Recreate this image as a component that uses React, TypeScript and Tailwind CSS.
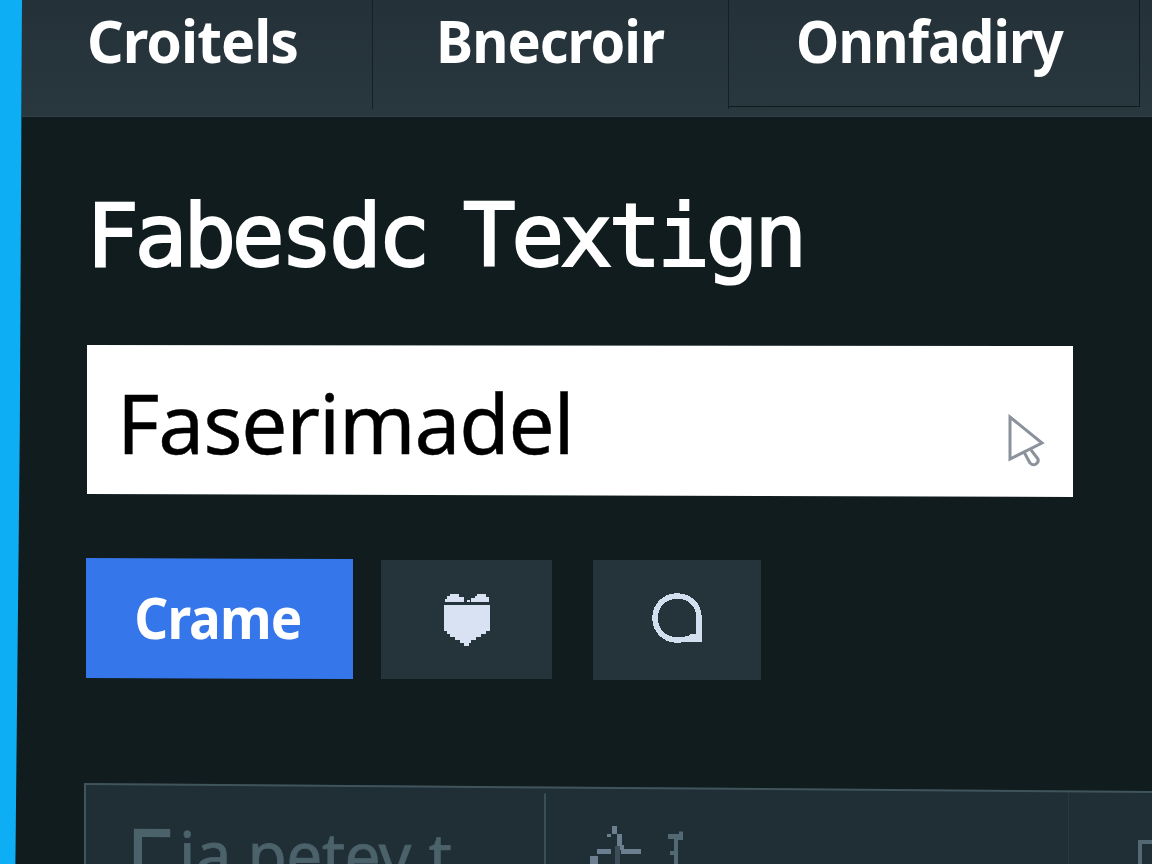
import React from 'react';

const tabs = [
  { label: 'Croitels', className: 'h-[109px] w-[351px] border-r border-[#152023] pl-[65px]', text: 'scale-x-[0.97]' },
  { label: 'Bnecroir', className: 'h-[109px] w-[356px] border-r border-[#152023] pl-[63px]', text: 'scale-x-[0.945]' },
  { label: 'Onnfadiry', className: 'h-[107px] w-[411px] border-r border-b border-[#111b1d] pl-[67px]', text: 'scale-x-[0.928]' },
];

const TabBar: React.FC = () => (
  <nav className="flex h-[117px] bg-gradient-to-b from-[#243138] to-[#29373e] border-b border-[#314047] text-[59px] leading-[80px] font-bold tracking-[-1px] text-white">
    {tabs.map((tab) => (
      <div key={tab.label} className={`shrink-0 whitespace-nowrap ${tab.className}`}>
        <span className={`inline-block origin-left ${tab.text}`}>{tab.label}</span>
      </div>
    ))}
  </nav>
);

const PointerIcon: React.FC = () => (
  <svg width="38" height="54" viewBox="0 0 38 54" fill="none" stroke="#8b929c" strokeWidth="3">
    <path d="M3 3v42L35 29Z" />
    <path d="M17 38l6 11q3 3 6 1t2-5l-7-9" />
  </svg>
);

const ShieldIcon: React.FC = () => (
  <svg width="48" height="54" viewBox="0 0 48 54" fill="#d8e2f2" shapeRendering="crispEdges">
    <path d="M2 9V6h2V3h3V1h9v3h5v5ZM24 9V7h3v2ZM28 9V5h4V3h2V1h9v3h3v5Z" />
    <path d="M1 12h46v26h-4v3h-5v3h-5v3h-5v3h-2v3h-5v-3h-4v-3h-5v-3H7v-3H4v-3H1Z" />
  </svg>
);

const BubbleIcon: React.FC = () => (
  <svg width="52" height="52" viewBox="0 0 52 52" fill="none" stroke="#d3deef" strokeWidth="5.5" shapeRendering="crispEdges">
    <path d="M48 25C48 11 38 3 26 3S4 12 4 25s10 22 22 22c4 0 8-1 11-1h11Z" />
    <path d="M36 47l3-6h9v6Z" fill="#d3deef" stroke="none" />
  </svg>
);

const DetailsPanel: React.FC = () => (
  <div className="ml-[62px] h-[90px] overflow-hidden flex origin-top-left skew-y-[0.43deg] border-t-2 border-l-2 border-[#40545b] bg-[#202e35] text-[#4b626b]">
    <div className="flex w-[458px] shrink-0 pl-[39px] whitespace-nowrap text-[64px] leading-[135px]">
      <span className="w-[54px] origin-left scale-x-[0.86] text-[106px] leading-[157px]">F</span>
      <span className="[-webkit-text-stroke:0.8px_#4b626b]">ia</span>
      <span className="pl-[16px] tracking-[-0.5px] [-webkit-text-stroke:0.8px_#4b626b]">petev</span>
      <span className="pl-[18px] [-webkit-text-stroke:0.8px_#4b626b]">t</span>
    </div>
    <div className="mt-[5px] flex w-[524px] shrink-0 border-l-2 border-[#394e57] pl-[44px] pt-[32px]">
      <svg width="52" height="46" viewBox="0 0 52 46" fill="#6b7f90" shapeRendering="crispEdges">
        <path d="M22 0h5v8h-5ZM17 8h4v3h-4ZM27 8h5v11h2v5h-4v-4h-3ZM7 23h14v5H7ZM31 23h20v5H31ZM0 30h8v12H0Z" />
        <path d="M25 20h5v24h-5Z" fill="#3d4e58" />
      </svg>
      <svg className="ml-[25px] mt-[5px]" width="18" height="42" viewBox="0 0 18 42" fill="#526873" shapeRendering="crispEdges">
        <path d="M1 3h11V0h4v9h-5v27H7V24H3v-4h4V8H1Z" />
      </svg>
    </div>
    <div className="flex-1 border-l border-[#263840] pl-[69px] pt-[47px]">
      <div className="h-[50px] w-[40px] border-t-4 border-l-4 border-[#526873]" />
    </div>
  </div>
);

const App: React.FC = () => {
  return (
    <div className="relative flex h-[864px] w-[1152px] overflow-hidden bg-[#101c1d] font-['Noto_Sans',sans-serif]">
      <aside className="w-[22px] shrink-0 bg-[#0eaef4] [clip-path:polygon(0_0,100%_0,90%_50%,70%_100%,0_100%)]" />

      <main className="w-[1130px] shrink-0">
        <TabBar />

        <h1 className="ml-[64px] mt-[64px] h-[110px] whitespace-pre font-['DejaVu_Sans_Mono',monospace] text-[88px] leading-[110px] tracking-[-4.4px] [word-spacing:-12px] text-white [-webkit-text-stroke:2px_white]">
          Fabesdc Textign
        </h1>

        <div className="ml-[65px] mt-[54px] flex h-[152px] w-[986px] items-start justify-between bg-white pl-[30px] pr-[28px] [clip-path:polygon(0_0,100%_1px,100%_100%,0_149px)]">
          <span className="text-[82px] leading-[154px] tracking-[-1.2px] text-black [-webkit-text-stroke:0.4px_black]">Faserimadel</span>
          <div className="mt-[69px]">
            <PointerIcon />
          </div>
        </div>

        <div className="ml-[64px] mt-[61px] flex items-start">
          <button className="h-[121px] w-[267px] bg-[#3577ea] pb-[2px] pr-[4px] text-[57px] font-bold tracking-[-1px] text-white [clip-path:polygon(0_0,100%_1px,100%_100%,0_120px)]">
            <span className="inline-block scale-x-[0.93]">Crame</span>
          </button>
          <button className="ml-[28px] mt-[2px] flex h-[119px] w-[171px] items-center justify-center bg-[#25343b]">
            <ShieldIcon />
          </button>
          <button className="ml-[41px] mt-[2px] flex h-[120px] w-[168px] items-center justify-center bg-[#25343b] pb-[3px]">
            <BubbleIcon />
          </button>
        </div>

        <div className="mt-[103px]">
          <DetailsPanel />
        </div>
      </main>
    </div>
  );
};

export default App;
